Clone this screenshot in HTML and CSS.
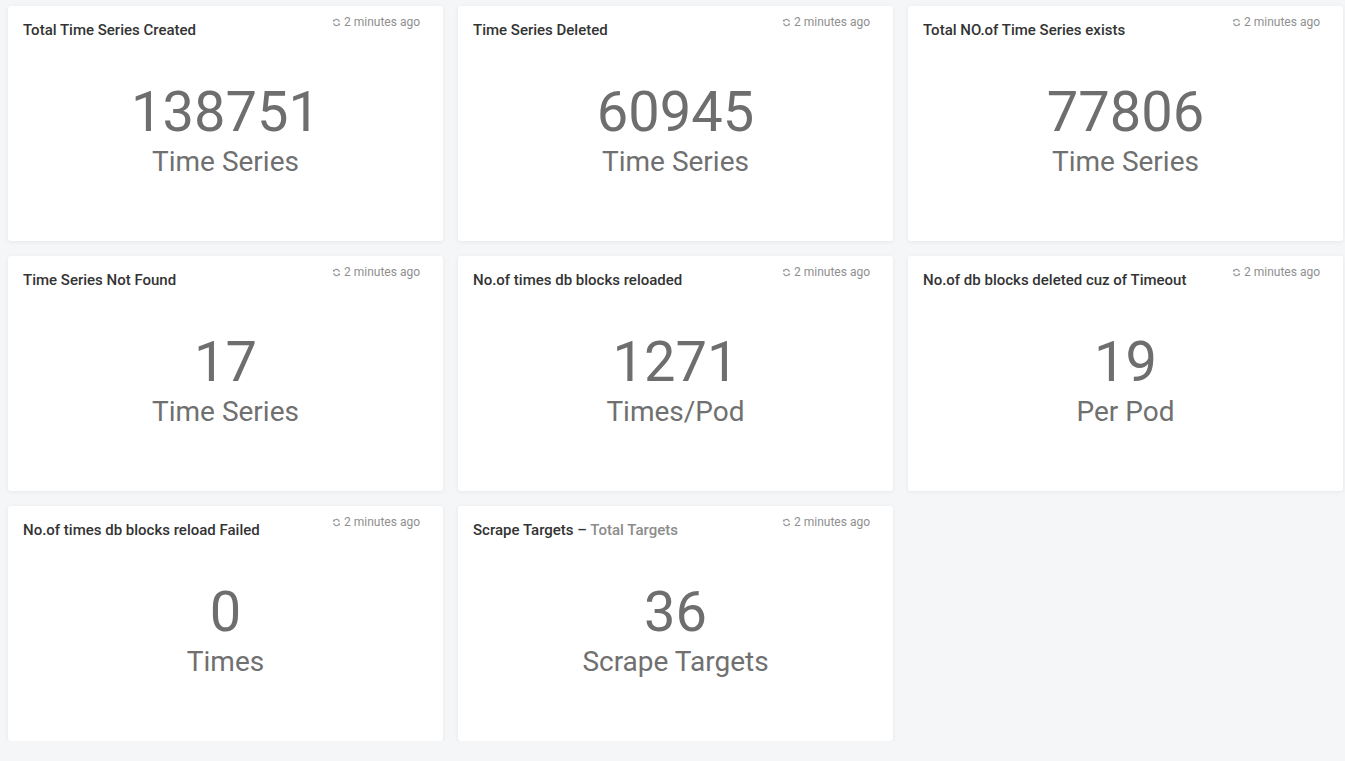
FILE: index.html
```html
<!DOCTYPE html>
<html>
<head>
<meta charset="utf-8">
<link rel="stylesheet" href="styles.css">
</head>
<body>
<div class="grid">
  <div class="card">
    <div class="head"><div class="title">Total Time Series Created</div><div class="time"><svg class="ico" viewBox="0 0 10 10"><path d="M8.2 4.2A3.3 3.3 0 0 0 2.2 3" /><path d="M1.8 5.8A3.3 3.3 0 0 0 7.8 7" /><path class="f" d="M1.2 1.4L3.6 3.6L1 4.2Z"/><path class="f" d="M8.8 8.6L6.4 6.4L9 5.8Z"/></svg>2 minutes ago</div></div>
    <div class="body"><div class="num">138751</div><div class="unit">Time Series</div></div>
  </div>
  <div class="card">
    <div class="head"><div class="title">Time Series Deleted</div><div class="time"><svg class="ico" viewBox="0 0 10 10"><path d="M8.2 4.2A3.3 3.3 0 0 0 2.2 3" /><path d="M1.8 5.8A3.3 3.3 0 0 0 7.8 7" /><path class="f" d="M1.2 1.4L3.6 3.6L1 4.2Z"/><path class="f" d="M8.8 8.6L6.4 6.4L9 5.8Z"/></svg>2 minutes ago</div></div>
    <div class="body"><div class="num">60945</div><div class="unit">Time Series</div></div>
  </div>
  <div class="card">
    <div class="head"><div class="title">Total NO.of Time Series exists</div><div class="time"><svg class="ico" viewBox="0 0 10 10"><path d="M8.2 4.2A3.3 3.3 0 0 0 2.2 3" /><path d="M1.8 5.8A3.3 3.3 0 0 0 7.8 7" /><path class="f" d="M1.2 1.4L3.6 3.6L1 4.2Z"/><path class="f" d="M8.8 8.6L6.4 6.4L9 5.8Z"/></svg>2 minutes ago</div></div>
    <div class="body"><div class="num">77806</div><div class="unit">Time Series</div></div>
  </div>
  <div class="card">
    <div class="head"><div class="title">Time Series Not Found</div><div class="time"><svg class="ico" viewBox="0 0 10 10"><path d="M8.2 4.2A3.3 3.3 0 0 0 2.2 3" /><path d="M1.8 5.8A3.3 3.3 0 0 0 7.8 7" /><path class="f" d="M1.2 1.4L3.6 3.6L1 4.2Z"/><path class="f" d="M8.8 8.6L6.4 6.4L9 5.8Z"/></svg>2 minutes ago</div></div>
    <div class="body"><div class="num">17</div><div class="unit">Time Series</div></div>
  </div>
  <div class="card">
    <div class="head"><div class="title">No.of times db blocks reloaded</div><div class="time"><svg class="ico" viewBox="0 0 10 10"><path d="M8.2 4.2A3.3 3.3 0 0 0 2.2 3" /><path d="M1.8 5.8A3.3 3.3 0 0 0 7.8 7" /><path class="f" d="M1.2 1.4L3.6 3.6L1 4.2Z"/><path class="f" d="M8.8 8.6L6.4 6.4L9 5.8Z"/></svg>2 minutes ago</div></div>
    <div class="body"><div class="num">1271</div><div class="unit">Times/Pod</div></div>
  </div>
  <div class="card">
    <div class="head"><div class="title">No.of db blocks deleted cuz of Timeout</div><div class="time"><svg class="ico" viewBox="0 0 10 10"><path d="M8.2 4.2A3.3 3.3 0 0 0 2.2 3" /><path d="M1.8 5.8A3.3 3.3 0 0 0 7.8 7" /><path class="f" d="M1.2 1.4L3.6 3.6L1 4.2Z"/><path class="f" d="M8.8 8.6L6.4 6.4L9 5.8Z"/></svg>2 minutes ago</div></div>
    <div class="body"><div class="num">19</div><div class="unit">Per Pod</div></div>
  </div>
  <div class="card">
    <div class="head"><div class="title">No.of times db blocks reload Failed</div><div class="time"><svg class="ico" viewBox="0 0 10 10"><path d="M8.2 4.2A3.3 3.3 0 0 0 2.2 3" /><path d="M1.8 5.8A3.3 3.3 0 0 0 7.8 7" /><path class="f" d="M1.2 1.4L3.6 3.6L1 4.2Z"/><path class="f" d="M8.8 8.6L6.4 6.4L9 5.8Z"/></svg>2 minutes ago</div></div>
    <div class="body"><div class="num">0</div><div class="unit">Times</div></div>
  </div>
  <div class="card">
    <div class="head"><div class="title">Scrape Targets <span class="dash">–</span> <span class="sub">Total Targets</span></div><div class="time"><svg class="ico" viewBox="0 0 10 10"><path d="M8.2 4.2A3.3 3.3 0 0 0 2.2 3" /><path d="M1.8 5.8A3.3 3.3 0 0 0 7.8 7" /><path class="f" d="M1.2 1.4L3.6 3.6L1 4.2Z"/><path class="f" d="M8.8 8.6L6.4 6.4L9 5.8Z"/></svg>2 minutes ago</div></div>
    <div class="body"><div class="num">36</div><div class="unit">Scrape Targets</div></div>
  </div>
</div>
</body>
</html>
```
FILE: styles.css
```css
html, body {
  margin: 0;
  padding: 0;
  background: #f5f6f8;
  font-family: Roboto, "Liberation Sans", Arial, sans-serif;
}
.grid {
  display: grid;
  grid-template-columns: repeat(3, 435px);
  grid-auto-rows: 235px;
  gap: 15px;
  padding: 6px 2px 0 8px;
}
.card {
  background: #fff;
  border-radius: 3px;
  box-shadow: 0 1px 4px rgba(40, 60, 90, 0.08);
  display: flex;
  flex-direction: column;
  padding: 8px 23px 0 15px;
}
.head {
  display: flex;
  justify-content: space-between;
  align-items: flex-start;
}
.title {
  margin-top: 6px;
  font-size: 15px;
  line-height: 20px;
  font-weight: 500;
  color: #333;
}
.title .dash {
  color: #333;
}
.title .sub {
  color: #8c8c8c;
}
.time {
  display: flex;
  align-items: center;
  font-size: 12px;
  line-height: 16px;
  color: #8f8f8f;
}
.ico {
  width: 9px;
  height: 9px;
  margin-right: 3px;
  fill: none;
  stroke: #9a9a9a;
  stroke-width: 1.3;
}
.ico .f {
  fill: #9a9a9a;
  stroke: none;
}
.body {
  margin-top: 44px;
  margin-left: 8px;
  display: flex;
  flex-direction: column;
  align-items: center;
}
.num {
  font-size: 56px;
  line-height: 56px;
  color: #6e6e6e;
}
.unit {
  margin-top: 8px;
  font-size: 28px;
  line-height: 28px;
  color: #707070;
}
```
